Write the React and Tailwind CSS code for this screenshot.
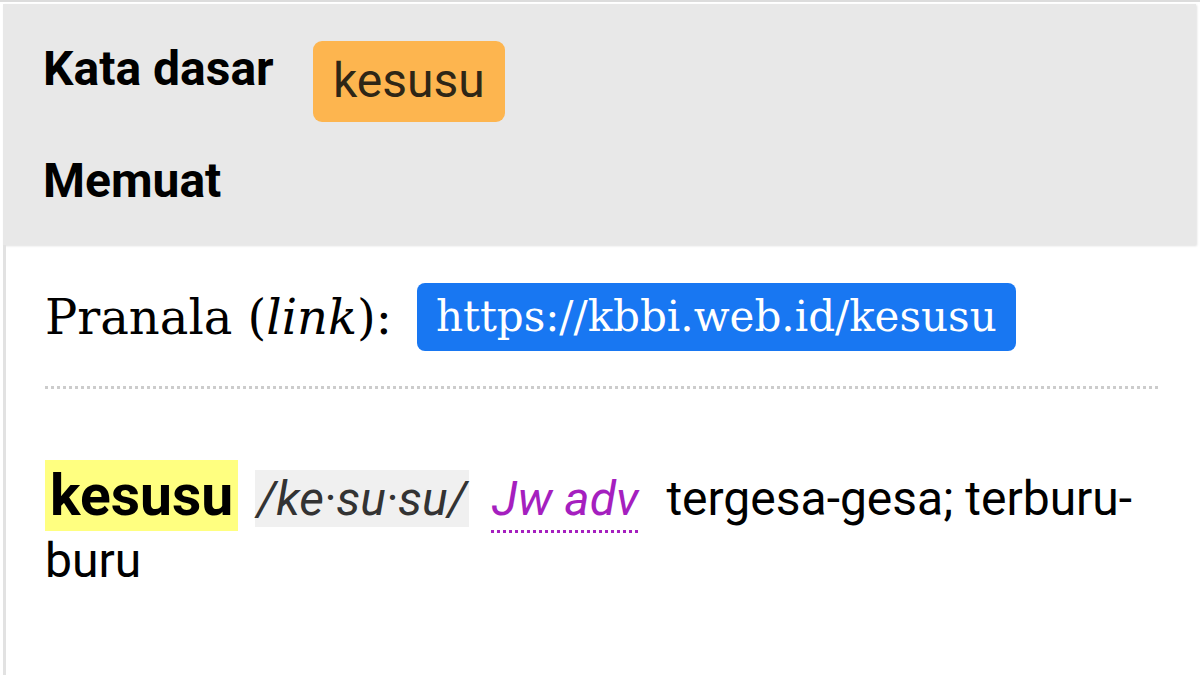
import React from "react";

export default function App() {
  return (
    <div className="w-[1200px] h-[675px] overflow-hidden flex flex-col bg-white border-t-2 border-[#dcdcdc] font-['Roboto',sans-serif] text-black">
      {/* Header panel */}
      <div className="shrink-0 mt-[2px] ml-[3px] mr-[4px] h-[241px] bg-[#e8e8e8] shadow-[1px_1px_2px_rgba(0,0,0,0.12)] pl-[40px] pt-[37px]">
        <div className="flex items-start">
          <div className="w-[270px] -mt-[4px] text-[48px] font-bold leading-[64px]">Kata dasar</div>
          <div className="h-[81px] px-[20px] rounded-[9px] bg-[#fdb54f] text-[#2e2616] text-[48px] leading-[80px]">
            kesusu
          </div>
        </div>
        <div className="mt-[27px] text-[48px] font-bold leading-[64px]">Memuat</div>
      </div>

      {/* Content */}
      <div className="flex-1 ml-[3px] border-l-[3px] border-[#e2e2e2] pl-[39px] pr-[42px]">
        <div className="flex items-center mt-[38px]">
          <span className="font-['DejaVu_Serif',serif] text-[48px] leading-[68px]">
            Pranala (<i>link</i>):
          </span>
          <span className="ml-[25px] h-[68px] px-[19px] rounded-[8px] bg-[#1877f2] text-white font-['DejaVu_Serif',serif] text-[42px] leading-[68px]">
            https://kbbi.web.id/kesusu
          </span>
        </div>

        <div className="mt-[35px] border-t-[3px] border-dotted border-[#cccccc]" />

        <p className="mt-[76px] text-[48px] leading-[62px]">
          <b className="bg-[#ffff80] px-[5px] py-[2px] text-[57px]">kesusu</b>{" "}
          <i className="ml-[5px] bg-[#f0f0f0] text-[#333] px-[2px]">/ke·su·su/</i>{" "}
          <i className="ml-[11px] text-[#a51fbf] underline decoration-dotted decoration-[#a51fbf] underline-offset-[15px] decoration-[3px]">
            Jw adv
          </i>{" "}
          <span className="ml-[16px]">tergesa-gesa; terburu-buru</span>
        </p>
      </div>
    </div>
  );
}
